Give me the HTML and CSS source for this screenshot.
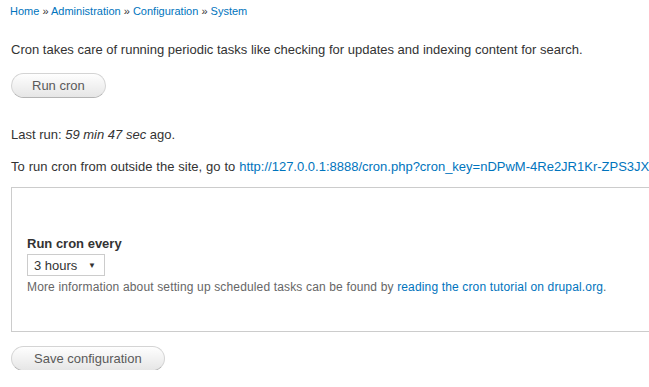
FILE: index.html
```html
<!DOCTYPE html>
<html>
<head>
<meta charset="utf-8" />
<meta name="viewport" content="width=device-width,initial-scale=1.0"/>
<link rel="stylesheet" href="styles.css">
</head>
<body>
<div class="page">
<div class="breadcrumb">
<a href="#">Home</a> &raquo; <a href="#">Administration</a> &raquo; <a href="#">Configuration</a> &raquo; <a href="#">System</a>
</div>

<form class="cron-form">
<p class="intro">Cron takes care of running periodic tasks like checking for updates and indexing content for search.</p>
<div class="actions"><input type="button" class="btn" value="Run cron" /></div>

<p class="lastrun">Last run: <em>59 min 47 sec</em> ago.</p>
<p class="outside">To run cron from outside the site, go to <a href="#">http://127.0.0.1:8888/cron.php?cron_key=nDPwM-4Re2JR1Kr-ZPS3JXp5sH8u0EJ0TUxBnqZdlGk</a></p>

<fieldset class="settings">
<div class="form-item">
<label for="cron_run">Run cron every</label>
<div class="select-box" id="cron_run"><span>3 hours</span><span class="arrow">&#9660;</span></div>
<div class="description">More information about setting up scheduled tasks can be found by <a href="#">reading the cron tutorial on drupal.org</a>.</div>
</div>
</fieldset>

<div class="actions"><input type="submit" class="btn btn-save" value="Save configuration" /></div>
</form>
</div>
</body>
</html>
```

FILE: styles.css
```css
html {
     overflow: hidden;
}
body {
     margin: 0;
     font-family: "Liberation Sans", Arial, sans-serif;
     font-size: 13px;
     color: #333;
     background: #fff;
}
a {
     color: #0074bd;
     text-decoration: none;
}
.page {
     width: 900px;
     padding: 0 11px;
}

.breadcrumb {
     font-size: 11px;
     color: #333;
     padding: 5px 0 0 0;
     margin-left: -1px;
     height: 21px;
}

.cron-form p {
     margin: 0;
     white-space: nowrap;
}
.intro {
     padding-top: 16px;
     height: 31px;
}
.actions {
     height: 24px;
}
.lastrun {
     padding-top: 30px;
     height: 32px;
}
.outside {
     height: 28px;
     word-spacing: 0.3px;
}

.btn {
     font-family: "Liberation Sans", Arial, sans-serif;
     font-size: 13px;
     color: #5a5a5a;
     height: 25px;
     padding: 0 20px;
     border: 1px solid #d4d4d4;
     border-bottom-color: #b4b4b4;
     border-radius: 15px;
     background: linear-gradient(#fefefe, #e6e6e6);
     margin: 0;
}
.btn-save {
     padding: 0 22px;
}

.settings {
     margin: 0 0 14px 0;
     padding: 48px 15px 37px 15px;
     border: 1px solid #ccc;
     min-width: 0;
}
.form-item label {
     display: block;
     font-weight: bold;
     font-size: 13px;
     color: #333;
     height: 18px;
}
.select-box {
     display: flex;
     justify-content: space-between;
     align-items: center;
     box-sizing: border-box;
     width: 78px;
     height: 22px;
     border: 1px solid #ccc;
     padding: 0 8px 0 6px;
     color: #333;
     font-size: 13px;
     margin-bottom: 4px;
}
.select-box .arrow {
     font-size: 8px;
}
.description {
     font-size: 12px;
     color: #666;
     letter-spacing: 0.15px;
     white-space: nowrap;
}
```
